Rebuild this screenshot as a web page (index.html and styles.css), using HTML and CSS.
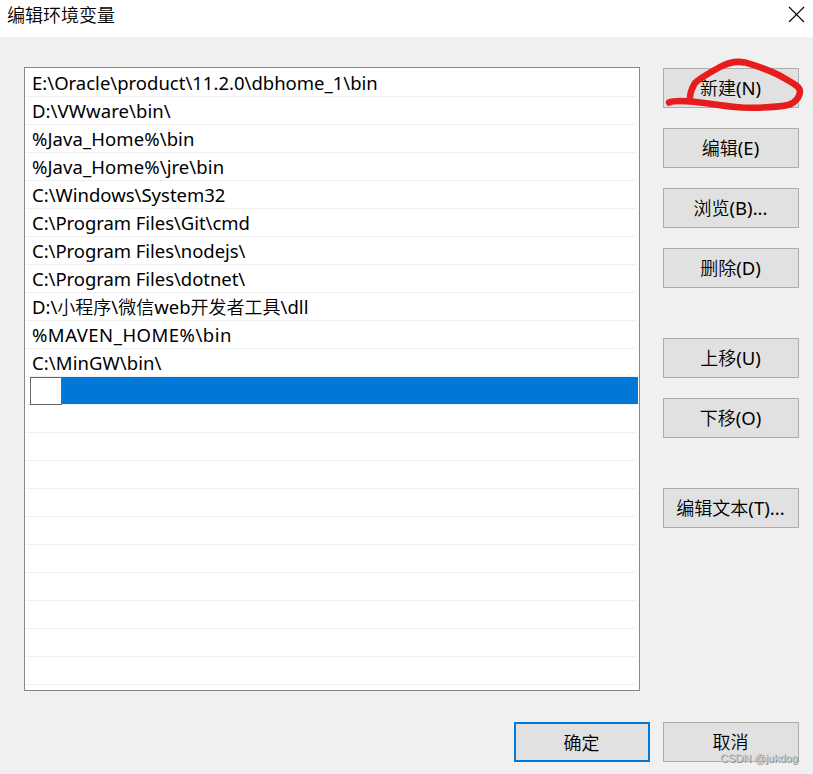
FILE: index.html
```html
<!DOCTYPE html>
<html lang="zh-CN">
<head>
<meta charset="utf-8">
<title>编辑环境变量</title>
<link rel="stylesheet" href="styles.css">
</head>
<body>
<div class="dialog">
  <header class="titlebar">
    <h1 class="title">编辑环境变量</h1>
    <svg class="close" width="17" height="17" viewBox="0 0 17 17"><path d="M1 1L16 16M16 1L1 16"/></svg>
  </header>
  <main class="content">
    <ul class="list">
      <li>E:\Oracle\product\11.2.0\dbhome_1\bin</li>
      <li class="loose">D:\VWware\bin\</li>
      <li class="loose">%Java_Home%\bin</li>
      <li class="loose">%Java_Home%\jre\bin</li>
      <li>C:\Windows\System32</li>
      <li class="tight">C:\Program Files\Git\cmd</li>
      <li class="tight">C:\Program Files\nodejs\</li>
      <li class="tight">C:\Program Files\dotnet\</li>
      <li>D:\<b>小程序</b>\<b>微信</b>web<b>开发者工具</b>\dll</li>
      <li class="wide">%MAVEN_HOME%\bin</li>
      <li class="loose">C:\MinGW\bin\</li>
      <li class="selected"><div class="editor"></div></li>
      <li></li><li></li><li></li><li></li><li></li><li></li><li></li><li></li><li></li><li></li>
    </ul>
    <div class="side">
      <button>新建<span>(N)</span></button>
      <button>编辑<span>(E)</span></button>
      <button>浏览<span>(B)...</span></button>
      <button>删除<span>(D)</span></button>
      <button class="gap">上移<span>(U)</span></button>
      <button>下移<span>(O)</span></button>
      <button class="gap">编辑文本<span>(T)...</span></button>
    </div>
  </main>
  <footer class="footer">
    <button class="default">确定</button>
    <button>取消</button>
  </footer>
  <svg class="mark" width="150" height="60" viewBox="660 55 150 60"><path d="M669 102.500C674 100 682 101 690 101.500C704 102 717 106 742 107.500C762 108 778 107 788 105C796 103 800 96 800 91C799.500 86 792 83 784 78C771 70 757 66 745 62.500C737 61 727 63 720 67C709 73 699 79 695 83C692 88 690 94 690 98"/></svg>
  <div class="watermark">CSDN @jukdog</div>
</div>
</body>
</html>
```

FILE: styles.css
```css
* { box-sizing: border-box; }
body { margin: 0; }
.dialog {
  position: relative;
  width: 813px;
  height: 774px;
  background: #f0f0f0;
  color: #000;
  font: 400 18.5px/28px "Noto Sans", "Noto Sans CJK SC", sans-serif;
  overflow: hidden;
}
.titlebar {
  display: flex;
  justify-content: space-between;
  height: 37px;
  padding: 0 8px 0 7px;
  background: #fff;
}
.title { margin: 0; font: 350 18px/28px "Noto Sans CJK SC", sans-serif; }
.close { margin-top: 6px; }
.close path { stroke: #000; stroke-width: 1.1; fill: none; }
.content { display: flex; gap: 23px; padding: 30px 14px 0 24px; }
.list {
  width: 616px;
  height: 624px;
  margin: 0;
  padding: 1px 2px 0 1px;
  border: 1px solid #828790;
  background: #fff;
  list-style: none;
}
.list li {
  height: 28px;
  padding-left: 6px;
  border-bottom: 1px solid #f0f0f0;
  white-space: pre;
  line-height: 27px;
}
.list b { font: 350 18px/20px "Noto Sans CJK SC", sans-serif; }
.list .loose { letter-spacing: 0.08px; }
.list .tight { letter-spacing: -0.05px; }
.list .wide { letter-spacing: 0.5px; }
.list .selected {
  margin: 0 -1px 0 0;
  padding-left: 4px;
}
.selected::before { content: ""; display: block; height: 27px; background: #0078d7; }
.editor { position: relative; width: 32px; height: 28px; margin-top: -27px; background: #fff; border: 1px solid #646464; }
.side { display: flex; flex-direction: column; gap: 20px; padding-top: 1px; }
button {
  width: 136px;
  height: 40px;
  padding: 0 1px 2px 0;
  border: 1px solid #adadad;
  background: #e1e1e1;
  color: #000;
  font: 350 18px/36px "Noto Sans CJK SC", sans-serif;
}
button span { font: 380 18.5px/20px "Noto Sans", sans-serif; }
.gap { margin-top: 30px; }
.footer { display: flex; justify-content: flex-end; gap: 13px; padding: 31px 14px 0; }
.default { border: 2px solid #0078d7; }
.mark { position: absolute; left: 660px; top: 55px; }
.mark path { fill: none; stroke: #e81c1c; stroke-width: 6.5; stroke-linecap: round; stroke-linejoin: round; }
.watermark {
  position: absolute;
  left: 720px;
  top: 750px;
  color: #ccc;
  font: 11px/16px "Liberation Sans", sans-serif;
  text-shadow: 1px 1px 0 #888;
  white-space: nowrap;
}
```
